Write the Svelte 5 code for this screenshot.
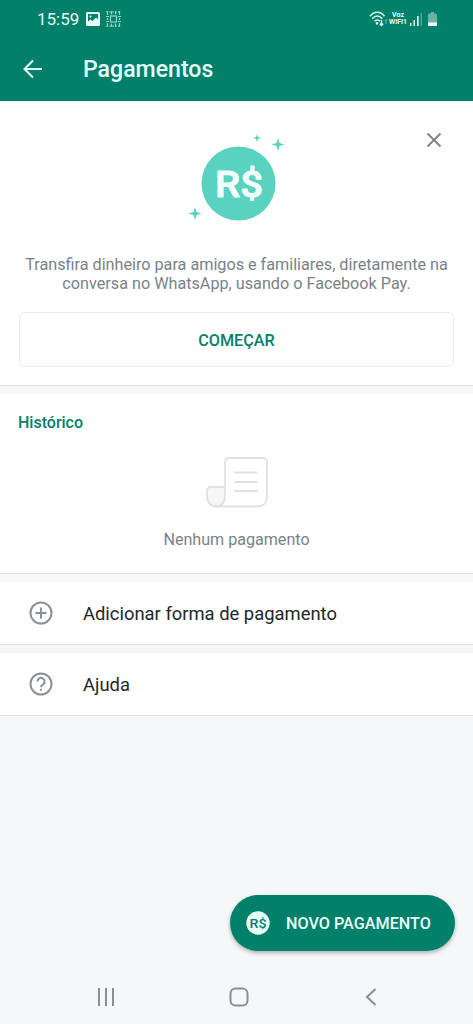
<script>
  let showIntro = true;

  let options = [
    { id: 'add', label: 'Adicionar forma de pagamento' },
    { id: 'help', label: 'Ajuda' },
  ];

  let closeIntro = () => {
    showIntro = false;
  }
</script>

<main>
  <header>
    <div class="status">
      <span class="time">15:59</span>
      <svg class="picture" width="14" height="14" viewBox="0 0 14 14">
        <path fill="#e4fff7" fill-rule="evenodd" d="M1.5 0h11A1.5 1.5 0 0 1 14 1.500v11a1.500 1.500 0 0 1-1.500 1.500h-11A1.500 1.500 0 0 1 0 12.500v-11A1.500 1.500 0 0 1 1.500 0zM2 2v7.500l2.500-2 2 1.500 3.500-3.500 2 2V2z" />
        <circle cx="4.500" cy="4.500" r="1" fill="#e4fff7" />
      </svg>
      <svg class="grid" width="15" height="16" viewBox="0 0 15 16" fill="none" stroke="#8fd5c1" stroke-width="1.200">
        <rect x="4.500" y="5" width="6" height="6" />
        <path stroke-dasharray="2 1" d="M0 1h15M0 15h15" />
        <path d="M1.500 0v4M5.500 0v3.500M9.500 0v3.500M13.500 0v4M1.500 12v4M5.500 12.500V16M9.500 12.500V16M13.500 12v4M0 5.500h3M0 10.500h3M12 5.500h3M12 10.500h3M1.500 7v2M13.500 7v2" />
      </svg>
      <div class="signals">
        <svg width="19" height="17" viewBox="0 0 19 17" fill="none" stroke="#d5f7ed" stroke-width="1.500">
          <path d="M1 5.200C5-.2 11.500-.2 15.500 5.200" />
          <path d="M3.300 7.800c3-3.700 6.900-3.700 9.900 0" />
          <path d="M5.500 10.300c1.600-1.900 3.900-1.900 5.500 0" />
          <circle cx="8" cy="12.300" r=".6" />
          <path d="M12.500 9v5.500M10.800 12.800l1.700 1.700 1.700-1.700" />
          <path stroke="#68b9a4" d="M17 13V8.500M15.800 9.800L17 8.500l1.200 1.300" stroke-width="1" />
        </svg>
        <span class="voz">Voz<br />WIFI1</span>
        <svg width="12" height="14" viewBox="0 0 12 14">
          <path fill="#d5f7ed" d="M0 11h1.500v3H0zM3.500 8H5v6H3.500zM7 4h1.700v10H7z" />
          <path fill="#4aa68f" d="M10.500 1H12v13h-1.500z" />
        </svg>
        <svg class="battery" width="9" height="14" viewBox="0 0 9 14">
          <path fill="#68b4a1" d="M3 0h3v1.500h1.500A1.500 1.500 0 0 1 9 3v8H0V3a1.500 1.500 0 0 1 1.500-1.500H3z" />
          <path fill="#fff" d="M0 10.500h9V13a1 1 0 0 1-1 1H1a1 1 0 0 1-1-1z" />
        </svg>
      </div>
    </div>
    <div class="toolbar">
      <svg width="20" height="20" viewBox="0 0 20 20" fill="none" stroke="#e4fff7" stroke-width="2">
        <path d="M19 10H2M10 1.500L1.500 10l8.500 8.500" />
      </svg>
      <h1>Pagamentos</h1>
    </div>
  </header>

  {#if showIntro}
    <section class="intro">
      <button class="close" aria-label="Fechar" on:click={closeIntro}>
        <svg width="16" height="16" viewBox="0 0 16 16" fill="none" stroke="#788389" stroke-width="1.800">
          <path d="M1.500 1.500l13 13M14.500 1.500l-13 13" />
        </svg>
      </button>
      <svg class="coin" width="100" height="90" viewBox="0 0 100 90">
        <g fill="#59d2bf">
          <circle cx="51.500" cy="52.500" r="37" />
          <path d="M91 7l1.500 5 5 1.500-5 1.500-1.500 5-1.500-5-5-1.500 5-1.500z" />
          <path d="M70 3l1 3 3 1-3 1-1 3-1-3-3-1 3-1z" />
          <path d="M8 76l1.500 5 5 1.500-5 1.500L8 89l-1.500-5-5-1.500 5-1.500z" />
        </g>
        <text x="52" y="65.500" text-anchor="middle" font-size="37" font-weight="500" textLength="48" lengthAdjust="spacingAndGlyphs" fill="#f1fffc" stroke="#f1fffc" stroke-width="1" stroke-linejoin="round">R$</text>
      </svg>
      <p>Transfira dinheiro para amigos e familiares, diretamente na conversa no WhatsApp, usando o Facebook Pay.</p>
      <button class="start">COMEÇAR</button>
    </section>
  {/if}

  <section class="history">
    <h2>Histórico</h2>
    <svg width="62" height="51" viewBox="0 0 62 51" fill="none" stroke="#dfe2e5" stroke-width="1.800">
      <path fill="#f4f6f8" d="M19 30H4.500A3.500 3.500 0 0 0 1 33.500V39.500a9.500 9.500 0 0 0 9.500 10c5 0 8.500-4.500 8.500-9.500z" />
      <path d="M10.500 49.500H52A9 9 0 0 0 61 40.500V5a4 4 0 0 0-4-4H23a4 4 0 0 0-4 4v35c0 5-3.500 9.500-8.500 9.500z" fill="#fff" />
      <path d="M28.500 15.500h23M28.500 25h23M28.500 34h23" />
    </svg>
    <p>Nenhum pagamento</p>
  </section>

  {#each options as option}
    <div class="option">
      <svg width="24" height="24" viewBox="0 0 24 24" fill="none" stroke="#899297" stroke-width="2">
        <circle cx="12" cy="12" r="10.500" />
        {#if option.id == 'add'}
          <path d="M12 6.500v11M6.500 12h11" />
        {:else}
          <path d="M8.400 9.500a3.600 3.600 0 1 1 5.700 2.900c-1.400 1-2.100 1.500-2.100 2.800" />
          <path d="M12 16.700v2" />
        {/if}
      </svg>
      <span>{option.label}</span>
    </div>
  {/each}

  <footer>
    <button class="new-payment">
      <svg width="24" height="24" viewBox="0 0 24 24">
        <circle cx="12" cy="12" r="11.700" fill="#e9fff9" />
        <text x="12" y="16.800" text-anchor="middle" font-size="13.500" font-weight="500" textLength="17" lengthAdjust="spacingAndGlyphs" fill="#028069">R$</text>
      </svg>
      <span>NOVO PAGAMENTO</span>
    </button>
    <nav>
      <svg width="18" height="18" viewBox="0 0 18 18" fill="none" stroke="#8c8f92" stroke-width="2">
        <path d="M2 0v18M9 0v18M16 0v18" />
      </svg>
      <svg width="20" height="20" viewBox="0 0 20 20" fill="none" stroke="#8c8f92" stroke-width="2">
        <rect x="1.500" y="1.500" width="17" height="17" rx="5" />
      </svg>
      <svg width="18" height="18" viewBox="0 0 18 18" fill="none" stroke="#8c8f92" stroke-width="2">
        <path d="M13.500 1L5 9l8.500 8" />
      </svg>
    </nav>
  </footer>
</main>

<style>

:global(body) {
  background-color: #f6f7f9;
}

main {
  display: flex;
  flex-direction: column;
  box-sizing: border-box;
  height: 1024px;
  background-color: #f6f7f9;
  font-family: Roboto, "Liberation Sans", sans-serif;
}

svg {
  display: block;
  flex: none;
}

h1, h2, p {
  margin: 0;
}

button {
  font-family: inherit;
  cursor: pointer;
}

header {
  height: 101px;
  box-sizing: border-box;
  background-color: #028069;
  color: #e4fff7;
}

.status {
  display: flex;
  align-items: center;
  height: 38px;
  padding: 0 36px 0 37px;
}

.time {
  width: 42px;
  font-size: 17px;
  line-height: 38px;
}

.picture {
  margin-left: 7px;
}

.grid {
  margin-left: 6px;
}

.signals {
  display: flex;
  align-items: center;
  margin-left: auto;
}

.voz {
  width: 18px;
  margin: 0 3px 0 1px;
  font-size: 7px;
  line-height: 7px;
  font-weight: 700;
  text-align: center;
}

.battery {
  margin-left: 6px;
}

.toolbar {
  display: flex;
  align-items: center;
  height: 62px;
  padding-left: 23px;
}

h1 {
  margin-left: 40px;
  padding-top: 2px;
  font-size: 23.1px;
  font-weight: 500;
  line-height: 60px;
}

section, .option {
  box-sizing: border-box;
  background-color: #ffffff;
  border-bottom: 1px solid #dfe1e2;
  margin-bottom: 8px;
}

.intro {
  position: relative;
  display: flex;
  flex-direction: column;
  align-items: center;
  height: 285px;
  padding: 30px 19px 0;
}

.close {
  position: absolute;
  top: 31px;
  right: 31px;
  padding: 0;
  border: 0;
  background: none;
}

.intro p {
  margin: 34px -4px 0;
  font-size: 16.2px;
  line-height: 19px;
  color: #788389;
  text-align: center;
}

.start {
  width: 100%;
  height: 55px;
  margin-top: 19px;
  padding-top: 3px;
  border: 1px solid #e8eaeb;
  border-radius: 6px;
  background-color: #ffffff;
  color: #028069;
  font-size: 16.2px;
  font-weight: 500;
}

.history {
  display: flex;
  flex-direction: column;
  align-items: center;
  height: 180px;
  padding: 19px 18px 0;
}

h2 {
  align-self: flex-start;
  font-size: 16px;
  font-weight: 500;
  line-height: 20px;
  color: #028069;
}

.history svg {
  margin-top: 24px;
}

.history p {
  margin-top: 22px;
  font-size: 16.1px;
  line-height: 20px;
  color: #788389;
}

.option {
  display: flex;
  align-items: center;
  height: 63px;
  padding-left: 29px;
}

.option span {
  margin-left: 30px;
  padding-top: 2px;
  font-size: 18.4px;
  line-height: 24px;
  color: #22272a;
}

.option:last-of-type {
  margin-bottom: 0;
}

footer {
  display: flex;
  flex-direction: column;
  margin-top: auto;
}

.new-payment {
  display: flex;
  align-items: center;
  align-self: flex-end;
  width: 225px;
  height: 56px;
  margin-right: 18px;
  padding: 0 0 0 16px;
  border: 0;
  border-radius: 28px;
  background-color: #028069;
  box-shadow: 0 2px 4px rgba(0, 0, 0, 0.3);
  color: #e9fff9;
  font-size: 16.2px;
  font-weight: 500;
}

.new-payment span {
  margin-left: 16px;
}

nav {
  display: flex;
  align-items: center;
  justify-content: space-between;
  height: 54px;
  margin-top: 19px;
  padding: 0 93px 0 97px;
}

</style>
